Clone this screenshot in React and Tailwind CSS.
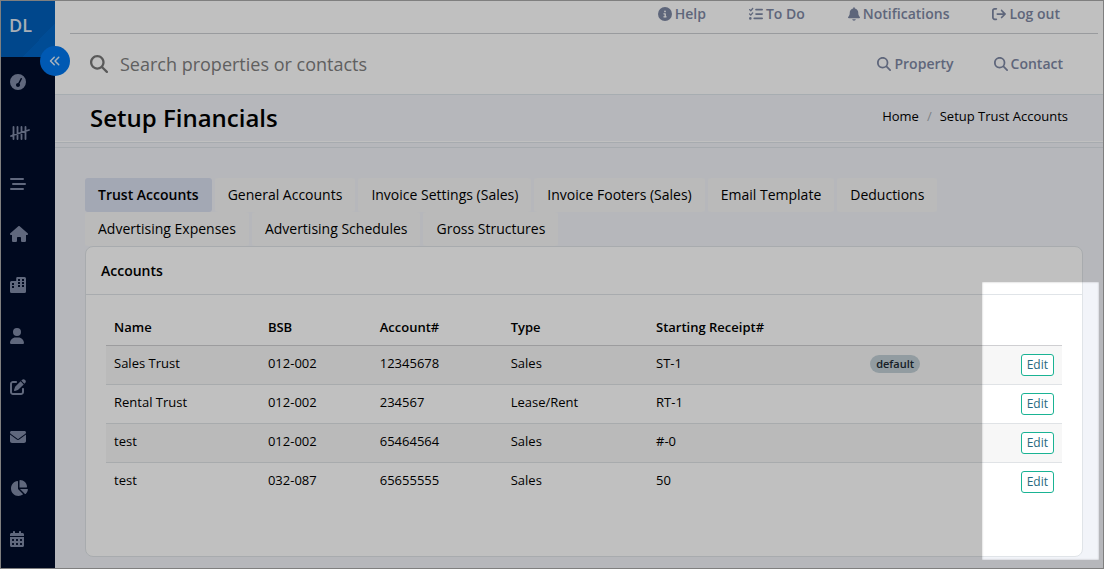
import {
  FaAnglesLeft,
  FaArrowRightFromBracket,
  FaBell,
  FaCalendarDays,
  FaChartPie,
  FaCircleInfo,
  FaEnvelope,
  FaGaugeSimpleHigh,
  FaHouse,
  FaListCheck,
  FaMagnifyingGlass,
  FaPenToSquare,
  FaUser,
} from 'react-icons/fa6'

function TallyIcon({ className }) {
  return (
    <svg
      viewBox="0 0 20 16"
      className={className}
      fill="none"
      stroke="currentColor"
      strokeWidth="1.8"
      strokeLinecap="round"
    >
      <path d="M3.500 2v12M7.500 2v12M11.500 2v12M15.500 2v12M1 11l18-6" />
    </svg>
  )
}

function StaggeredIcon({ className }) {
  return (
    <svg
      viewBox="0 0 16 16"
      className={className}
      fill="none"
      stroke="currentColor"
      strokeWidth="2"
      strokeLinecap="round"
    >
      <path d="M1 3h12M3 8h12M1 13h12" />
    </svg>
  )
}

function BuildingsIcon({ className }) {
  return (
    <svg viewBox="0 0 16 16" className={className} fill="currentColor" fillRule="evenodd">
      <path d="M8 0h6.500A1.500 1.500 0 0 1 16 1.500V14.500A1.500 1.500 0 0 1 14.500 16H1.500A1.500 1.500 0 0 1 0 14.500V5.500A1.500 1.500 0 0 1 1.500 4H6.200V1.500A1.500 1.500 0 0 1 8 0zM8 2v2h2V2zM12 2v2h2V2zM8 5v2h2V5zM12 5v2h2V5zM8 8v2h2V8zM12 8v2h2V8zM2 6v2h2V6zM2 9v2h2V9z" />
    </svg>
  )
}

const navItems = [
  { label: 'Dashboard', Icon: FaGaugeSimpleHigh, size: 'h-4 w-4' },
  { label: 'Tally', Icon: TallyIcon, size: 'h-4 w-5' },
  { label: 'Lists', Icon: StaggeredIcon, size: 'h-4 w-4' },
  { label: 'Properties', Icon: FaHouse, size: 'h-4 w-[18px]' },
  { label: 'Buildings', Icon: BuildingsIcon, size: 'h-4 w-4' },
  { label: 'Contacts', Icon: FaUser, size: 'h-4 w-3.5' },
  { label: 'Notes', Icon: FaPenToSquare, size: 'h-4 w-4' },
  { label: 'Mail', Icon: FaEnvelope, size: 'h-4 w-4' },
  { label: 'Reports', Icon: FaChartPie, size: 'h-4 w-[18px]' },
  { label: 'Calendar', Icon: FaCalendarDays, size: 'h-4 w-3.5' },
]

const topLinks = [
  { label: 'Help', Icon: FaCircleInfo, size: 'h-3.5 w-3.5' },
  { label: 'To Do', Icon: FaListCheck, size: 'h-3.5 w-3.5' },
  { label: 'Notifications', Icon: FaBell, size: 'h-3.5 w-3' },
  { label: 'Log out', Icon: FaArrowRightFromBracket, size: 'h-3.5 w-3.5' },
]

const tabs = [
  'Trust Accounts',
  'General Accounts',
  'Invoice Settings (Sales)',
  'Invoice Footers (Sales)',
  'Email Template',
  'Deductions',
  'Advertising Expenses',
  'Advertising Schedules',
  'Gross Structures',
]

const accounts = [
  { name: 'Sales Trust', bsb: '012-002', number: '12345678', type: 'Sales', receipt: 'ST-1', isDefault: true },
  { name: 'Rental Trust', bsb: '012-002', number: '234567', type: 'Lease/Rent', receipt: 'RT-1' },
  { name: 'test', bsb: '012-002', number: '65464564', type: 'Sales', receipt: '#-0' },
  { name: 'test', bsb: '032-087', number: '65655555', type: 'Sales', receipt: '50' },
]

function Sidebar() {
  return (
    <aside className="relative flex w-[54px] shrink-0 flex-col bg-[#000d2a]">
      <a
        href="#"
        className="flex h-14 items-center bg-linear-to-br from-[#005fba] from-70% to-[#0065c6] to-70% pb-2 pl-2 text-lg font-semibold text-[#dfe8f2]"
      >
        DL
      </a>
      <button
        type="button"
        aria-label="Collapse menu"
        className="absolute top-[45px] -right-[15px] flex size-[30px] items-center justify-center rounded-full bg-[#0077ee] text-xs text-[#dcebfc]"
      >
        <FaAnglesLeft />
      </button>
      <nav className="flex flex-1 flex-col pb-1">
        {navItems.map(({ label, Icon, size }) => (
          <a
            key={label}
            href="#"
            aria-label={label}
            className="flex flex-1 items-center pl-[9px] text-[#808ba6]"
          >
            <Icon className={size} />
          </a>
        ))}
      </nav>
    </aside>
  )
}

function Header() {
  return (
    <header className="border-b border-[#dee6ec] bg-white font-semibold text-[#7e88a4]">
      {/* Top links */}
      <div className="mr-[5px] ml-[15px] flex h-[33px] justify-end gap-[43px] border-b border-[#ccced2] pt-[3px] pr-[38px] text-sm">
        {topLinks.map(({ label, Icon, size }) => (
          <a key={label} href="#" className="flex h-5 items-center gap-[3px]">
            <Icon className={size} />
            {label}
          </a>
        ))}
      </div>

      {/* Search */}
      <div className="flex h-[60px] items-center pr-10 pl-[35px]">
        <label htmlFor="search" aria-label="Search" className="text-lg text-[#777777]">
          <FaMagnifyingGlass />
        </label>
        <input
          id="search"
          type="text"
          placeholder="Search properties or contacts"
          className="ml-3 min-w-0 flex-1 text-lg font-normal outline-none placeholder:text-[#808080]"
        />
        <div className="flex gap-10 text-sm">
          <a href="#" className="flex items-center gap-[3px]">
            <FaMagnifyingGlass />
            Property
          </a>
          <a href="#" className="flex items-center gap-[3px]">
            <FaMagnifyingGlass />
            Contact
          </a>
        </div>
      </div>
    </header>
  )
}

function AccountsTable() {
  return (
    <table className="w-full table-fixed text-left text-[13px]">
      <thead>
        <tr className="border-b border-[#cfcfd2] leading-5">
          <th className="w-[16.1%] p-2 font-semibold">Name</th>
          <th className="w-[11.7%] p-2 font-semibold">BSB</th>
          <th className="w-[13.7%] p-2 font-semibold">Account#</th>
          <th className="w-[15.2%] p-2 font-semibold">Type</th>
          <th className="w-[22.4%] p-2 font-semibold">Starting Receipt#</th>
          <th className="p-2"></th>
          <th className="p-2"></th>
        </tr>
      </thead>
      <tbody className="leading-[18px]">
        {accounts.map((account) => (
          <tr
            key={account.number}
            className="border-b border-[#e0e3e6] align-top last:border-0 odd:bg-[#f7f7f7]"
          >
            <td className="p-2">{account.name}</td>
            <td className="p-2">{account.bsb}</td>
            <td className="p-2">{account.number}</td>
            <td className="p-2">{account.type}</td>
            <td className="p-2">{account.receipt}</td>
            <td className="p-2">
              {account.isDefault && (
                <span className="mt-px block w-fit rounded-full bg-[#c2d0d6] px-1.5 text-[11px] font-semibold text-[#212a33]">
                  default
                </span>
              )}
            </td>
            <td className="p-2">
              <button
                type="button"
                className="ml-auto block h-[22px] rounded-[3px] border border-[#1ab394] bg-white px-[5px] text-xs text-[#286a7e]"
              >
                Edit
              </button>
            </td>
          </tr>
        ))}
      </tbody>
    </table>
  )
}

export default function App() {
  return (
    <div className="relative flex min-h-screen overflow-hidden border border-[#7f7f7f] bg-[#f2f4f9] font-['Open_Sans',sans-serif] text-black">
      <Sidebar />

      <div className="flex min-w-0 flex-1 flex-col">
        <Header />

        {/* Page title */}
        <div className="flex h-[47px] items-center justify-between border-b border-white px-[35px]">
          <h1 className="text-2xl font-semibold">Setup Financials</h1>
          <nav aria-label="Breadcrumb" className="flex gap-2 pb-0.5 text-[13px]">
            <a href="#">Home</a>
            <span className="text-[#a6acb3]">/</span>
            <a href="#">Setup Trust Accounts</a>
          </nav>
        </div>
        <div className="h-1.5 border-y border-[#dee3e9]"></div>

        <main className="flex flex-1 flex-col pt-[30px] pr-5 pb-[11px] pl-[30px]">
          {/* Tabs */}
          <div role="tablist" className="flex flex-wrap gap-x-[3px] text-sm">
            {tabs.map((tab, i) => (
              <button
                key={tab}
                type="button"
                role="tab"
                aria-selected={i === 0}
                className={
                  i === 0
                    ? 'h-[34px] rounded-[3px] bg-[#d9dff0] px-[13px] font-semibold'
                    : 'h-[34px] rounded-[3px] bg-[#f7f7f7] px-[13px]'
                }
              >
                {tab}
              </button>
            ))}
          </div>

          {/* Accounts card */}
          <section className="flex-1 rounded-lg border border-[#e0e4e8] bg-white">
            <h2 className="flex h-12 items-center border-b border-[#e0e4e8] px-[15px] text-sm font-semibold">
              Accounts
            </h2>
            <div className="px-5 pt-3.5 pb-5">
              <AccountsTable />
            </div>
          </section>
        </main>
      </div>

      {/* Spotlight over the edit column, everything else is dimmed */}
      <div className="pointer-events-none absolute top-[281px] right-1 h-[278px] w-[117px] shadow-[0_0_0_9999px_rgb(0_0_0/0.247),inset_0_0_2px_rgb(0_0_0/0.3)]"></div>
    </div>
  )
}
